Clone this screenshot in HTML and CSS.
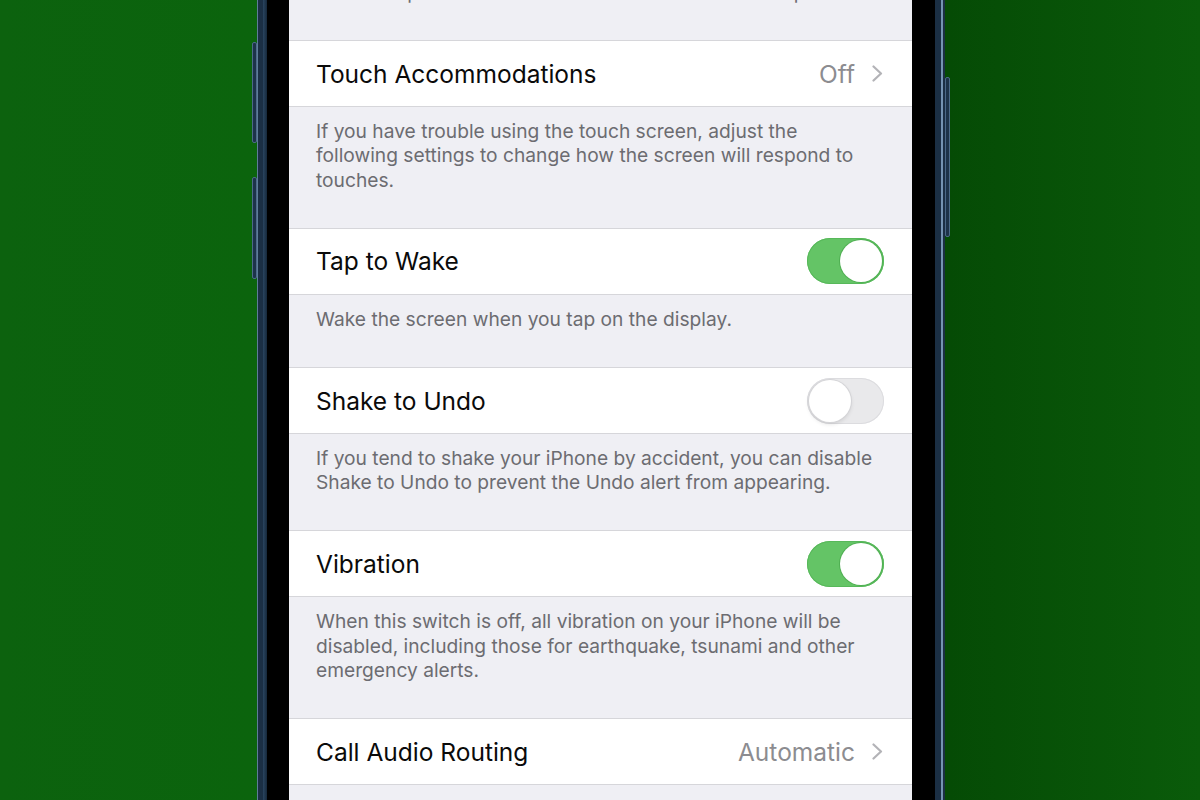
FILE: index.html
```html
<!DOCTYPE html>
<html lang="en">
<head>
    <meta charset="UTF-8">
    <meta name="viewport" content="width=device-width, initial-scale=1.0">
    <title>Touch Settings</title>
    <link rel="stylesheet" href="styles.css">
</head>
<body>
    <div class="phone">
        <span class="side-btn side-left side-a"></span>
        <span class="side-btn side-left side-b"></span>
        <span class="side-btn side-right side-c"></span>
        <div class="bezel">
            <div class="screen">
                <p class="note note-first">Choose a pointer device and how AssistiveTouch responds to touches.</p>

                <div class="cell">
                    <span class="label">Touch Accommodations</span>
                    <span class="value">Off</span>
                    <svg class="chevron" width="11" height="17" viewBox="0 0 11 17"><path d="M1.5 1.5 L9 8.5 L1.5 15.5" /></svg>
                </div>
                <p class="note">If you have trouble using the touch screen, adjust the following settings to change how the screen will respond to touches.</p>

                <div class="cell">
                    <span class="label">Tap to Wake</span>
                    <span class="switch on"><span class="knob"></span></span>
                </div>
                <p class="note">Wake the screen when you tap on the display.</p>

                <div class="cell">
                    <span class="label">Shake to Undo</span>
                    <span class="switch"><span class="knob"></span></span>
                </div>
                <p class="note">If you tend to shake your iPhone by accident, you can disable Shake to Undo to prevent the Undo alert from appearing.</p>

                <div class="cell">
                    <span class="label">Vibration</span>
                    <span class="switch on"><span class="knob"></span></span>
                </div>
                <p class="note">When this switch is off, all vibration on your iPhone will be disabled, including those for earthquake, tsunami and other emergency alerts.</p>

                <div class="cell">
                    <span class="label">Call Audio Routing</span>
                    <span class="value">Automatic</span>
                    <svg class="chevron" width="11" height="17" viewBox="0 0 11 17"><path d="M1.5 1.5 L9 8.5 L1.5 15.5" /></svg>
                </div>
                <div class="note note-last"></div>
            </div>
        </div>
    </div>
</body>
</html>
```

FILE: styles.css
```css
/* Page: green backdrop with the phone in the middle */
body {
    margin: 0;
    height: 100vh;
    overflow: hidden;
    display: flex;
    justify-content: center;
    font-family: Inter, "Noto Sans", sans-serif;
    background: linear-gradient(to right, #0c620e 0%, #0b640d 21%, #054b05 79%, #0a5b0a 100%);
}

.phone {
    position: relative;
    width: 688px;
    height: 800px;
    margin-left: 2px;
    padding: 0 10px;
    box-sizing: border-box;
    background: linear-gradient(to right,
        #5f7d99 0, #5f7d99 1px, #1b2f44 1px, #1b2f44 6px, #2a4560 6px, #16283a 10px,
        #16283a calc(100% - 10px), #1b2f44 calc(100% - 10px), #1b2f44 calc(100% - 4px),
        #7594b2 calc(100% - 4px), #7594b2 calc(100% - 2px), #1b2f44 calc(100% - 2px));
}

.side-btn {
    position: absolute;
    width: 5px;
    background: #1d3349;
    border: 1px solid #4c6a88;
    box-sizing: border-box;
    border-radius: 2px;
}

.side-left {
    left: -5px;
}

.side-right {
    right: -5px;
}

.side-a {
    top: 42px;
    height: 101px;
}

.side-b {
    top: 177px;
    height: 102px;
}

.side-c {
    top: 77px;
    height: 160px;
}

.bezel {
    height: 100%;
    background: #000;
    padding: 0 23px 0 22px;
}

.screen {
    height: 100%;
    overflow: hidden;
    background: #efeff4;
    display: flex;
    flex-direction: column;
}

.note {
    flex-shrink: 0;
    margin: 0;
    padding: 12px 32px 36px 27px;
    font-size: 19.2px;
    line-height: 24.2px;
    color: #6c6c71;
}

.note-first {
    margin-top: -32px;
    white-space: nowrap;
}

.note-last {
    height: 60px;
}

.cell {
    flex-shrink: 0;
    height: 65px;
    display: flex;
    align-items: center;
    padding: 0 28px 0 27px;
    background: #fff;
    border-top: 1px solid #d6d6da;
    border-bottom: 1px solid #d6d6da;
}

.label {
    flex: 1;
    font-size: 24.5px;
    color: #0a0a0a;
}

.value {
    font-size: 24.5px;
    color: #8c8c90;
    margin-right: 17px;
}

.chevron {
    margin-right: 1px;
}

.chevron path {
    fill: none;
    stroke: #b3b3b7;
    stroke-width: 2.2;
    stroke-linecap: round;
    stroke-linejoin: round;
}

.switch {
    width: 77px;
    height: 46px;
    box-sizing: border-box;
    padding: 2px;
    border-radius: 23px;
    display: flex;
    background: #e9e9eb;
    box-shadow: inset 0 0 0 1px #dcdcdf;
}

.switch.on {
    justify-content: flex-end;
    background: #64c466;
    box-shadow: inset 0 0 0 1px #57b85a;
}

.knob {
    width: 42px;
    height: 42px;
    border-radius: 50%;
    background: #fff;
    box-shadow: 0 0 0 1px #d4d4d7, 0 2px 4px rgba(0, 0, 0, 0.12);
}

.switch.on .knob {
    box-shadow: 0 0 0 1px #4faf52;
}
```
